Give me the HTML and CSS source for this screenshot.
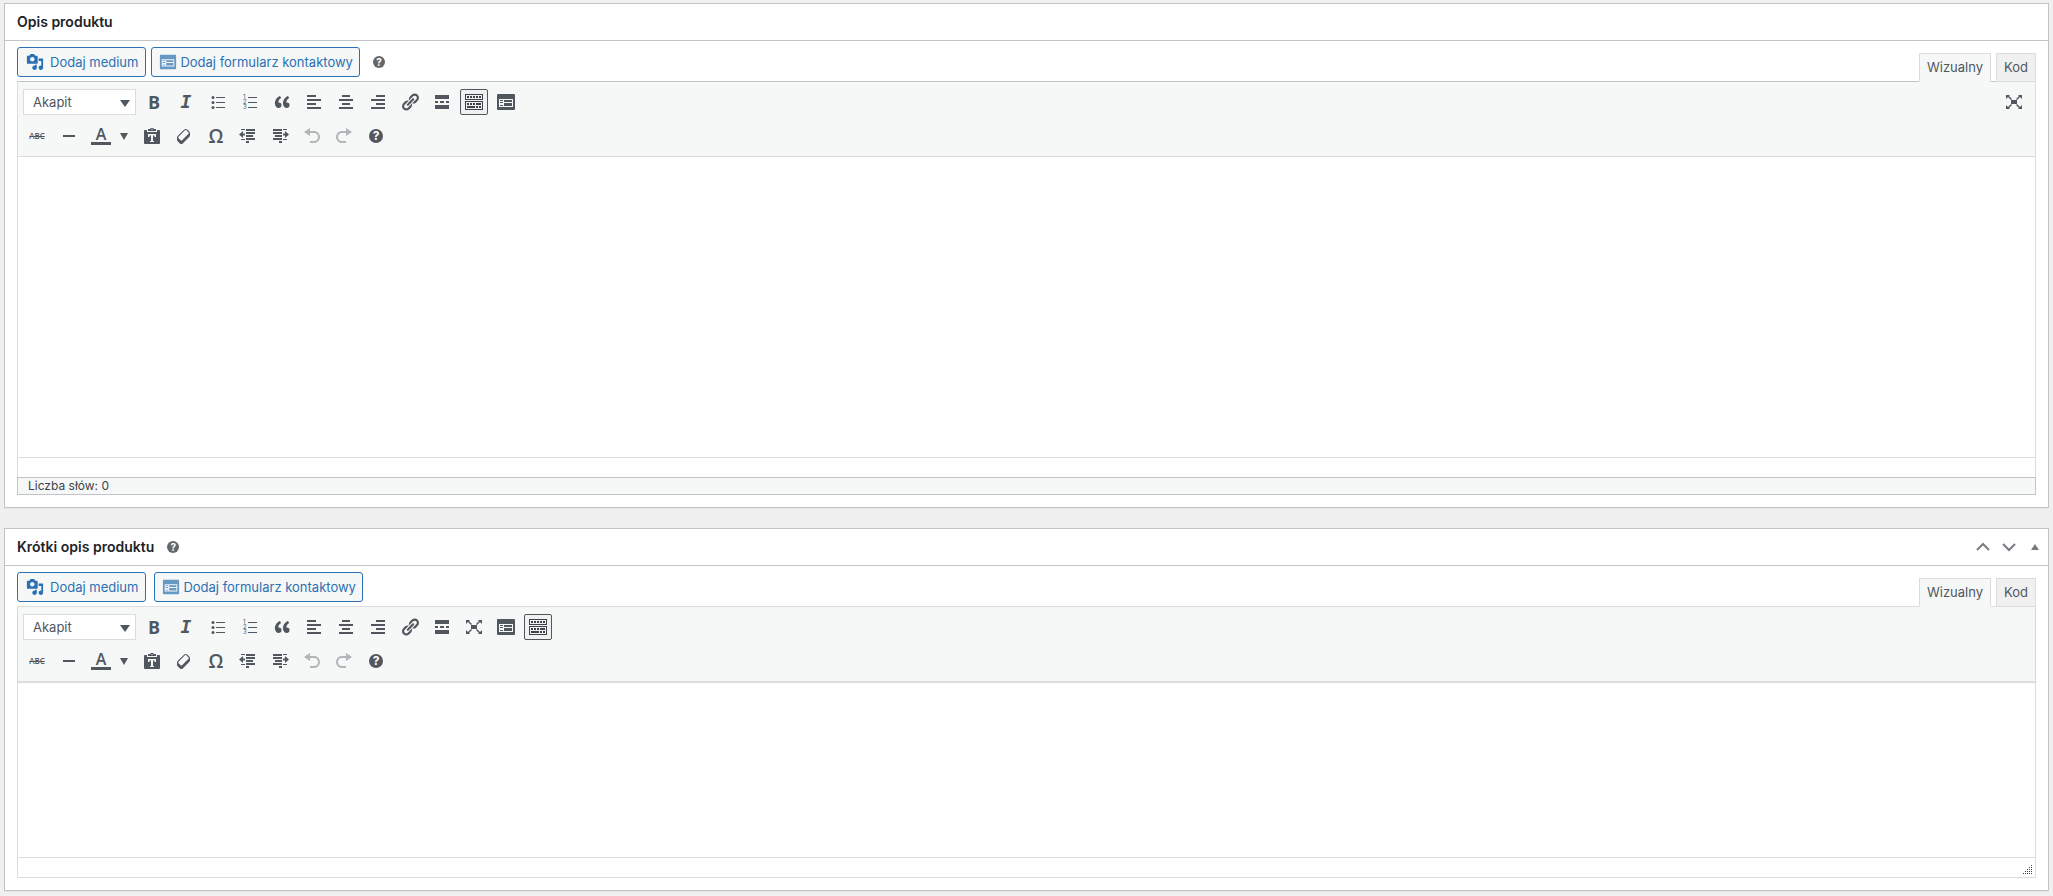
FILE: index.html
```html
<!DOCTYPE html>
<html lang="pl">
<head>
  <meta charset="UTF-8">
  <meta name="viewport" content="width=device-width, initial-scale=1.0">
  <title>Edycja produktu</title>
  <link rel="stylesheet" href="styles.css">
</head>
<body>
  <!-- Ikony -->
  <svg class="sprite" aria-hidden="true">
    <symbol id="i-media" viewBox="0 0 20 20"><path d="M13 11V4c0-.55-.45-1-1-1h-1.67L9 1H5L3.67 3H2c-.55 0-1 .45-1 1v7c0 .55.45 1 1 1h10c.55 0 1-.45 1-1zM7 4.5c1.38 0 2.5 1.12 2.5 2.5S8.38 9.5 7 9.5 4.5 8.38 4.5 7 5.62 4.5 7 4.5zM14 6h5v10.5c0 1.38-1.12 2.5-2.5 2.5S14 17.88 14 16.5s1.12-2.5 2.5-2.5c.17 0 .34.02.5.05V9h-3V6zm-4 8.05V13h2v3.5c0 1.38-1.12 2.5-2.5 2.5S7 17.88 7 16.5 8.12 14 9.5 14c.17 0 .34.02.5.05z"/></symbol>
    <symbol id="i-form" viewBox="0 0 20 20"><path fill-rule="evenodd" d="M2 2h16q1 0 1 1v14q0 1-1 1H2q-1 0-1-1V3q0-1 1-1zm1 5v8h14V7zM4 8h3v1H4zm0 2h3v1H4zm0 3h3v1H4zm4-5h8v2H8zm0 3h8v3H8z"/></symbol>
    <symbol id="i-ul" viewBox="0 0 20 20"><path d="M8 5h9v1H8zm0 5h9v1H8zm0 5h9v1H8z"/><circle cx="5" cy="5.500" r="1.500"/><circle cx="5" cy="10.500" r="1.500"/><circle cx="5" cy="15.500" r="1.500"/></symbol>
    <symbol id="i-ol" viewBox="0 0 20 20"><path d="M8 5h9v1H8zm0 5h9v1H8zm0 5h9v1H8z"/><text x="3" y="7" font-size="6">1</text><text x="3" y="12" font-size="6">2</text><text x="3" y="17" font-size="6">3</text></symbol>
    <symbol id="i-quote" viewBox="0 0 20 20"><path d="M9.490 13.220c0-.74-.2-1.380-.61-1.900-.62-.78-1.830-.88-2.530-.72-.29-1.650 1.110-3.750 2.920-4.650L7.880 4c-2.730 1.300-5.420 4.280-4.960 8.050C3.210 14.430 4.590 16 6.540 16c.85 0 1.560-.25 2.120-.75s.83-1.180.83-2.030zm8.050 0c0-.74-.2-1.380-.61-1.900-.63-.78-1.830-.88-2.530-.72-.29-1.650 1.110-3.750 2.920-4.650L15.930 4c-2.730 1.300-5.410 4.280-4.950 8.050.29 2.380 1.660 3.950 3.610 3.950.85 0 1.560-.25 2.120-.75s.83-1.180.83-2.030z"/></symbol>
    <symbol id="i-left" viewBox="0 0 20 20"><path d="M12 5V3H3v2h9zm5 4V7H3v2h14zm-5 4v-2H3v2h9zm5 4v-2H3v2h14z"/></symbol>
    <symbol id="i-center" viewBox="0 0 20 20"><path d="M14 5V3H6v2h8zm3 4V7H3v2h14zm-3 4v-2H6v2h8zm3 4v-2H3v2h14z"/></symbol>
    <symbol id="i-right" viewBox="0 0 20 20"><path d="M17 5V3H8v2h9zm0 4V7H3v2h14zm0 4v-2H8v2h9zm0 4v-2H3v2h14z"/></symbol>
    <symbol id="i-link" viewBox="0 0 20 20"><path d="M17.740 2.760c1.680 1.690 1.680 4.410 0 6.100l-1.530 1.520c-1.120 1.120-2.700 1.470-4.140 1.090l2.620-2.610.76-.77.76-.76c.84-.84.84-2.200 0-3.040-.84-.85-2.200-.85-3.040 0l-.77.76-3.380 3.380c-.37-1.440-.02-3.020 1.100-4.140l1.520-1.530c1.690-1.680 4.420-1.680 6.100 0zM8.590 13.430l5.340-5.340c.42-.42.42-1.100 0-1.520-.44-.43-1.130-.39-1.530 0l-5.330 5.340c-.42.42-.42 1.100 0 1.520.44.43 1.130.39 1.520 0zm-.76 2.290l4.140-4.150c.38 1.440.03 3.020-1.090 4.140l-1.520 1.530c-1.690 1.680-4.410 1.680-6.100 0-1.680-1.680-1.680-4.420 0-6.100l1.530-1.520c1.120-1.120 2.700-1.470 4.140-1.100l-4.140 4.150c-.85.84-.85 2.200 0 3.050.84.84 2.200.84 3.040 0z"/></symbol>
    <symbol id="i-more" viewBox="0 0 20 20"><path d="M17 7V3H3v4h14zM6 11V9H3v2h3zm6 0V9H8v2h4zm5 0V9h-3v2h3zm0 6v-4H3v4h14z"/></symbol>
    <symbol id="i-sink" viewBox="0 0 20 20"><path d="M19 2v6H1V2h18zm-1 5V3H2v4h16zM5 4v2H3V4h2zm3 0v2H6V4h2zm3 0v2H9V4h2zm3 0v2h-2V4h2zm3 0v2h-2V4h2zm2 5v9H1V9h18zm-1 8v-7H2v7h16zM5 11v2H3v-2h2zm3 0v2H6v-2h2zm3 0v2H9v-2h2zm6 0v2h-5v-2h5zm-6 3v2H3v-2h8zm3 0v2h-2v-2h2zm3 0v2h-2v-2h2z"/></symbol>
    <symbol id="i-full" viewBox="0 0 20 20"><path d="M7 8h6v4H7zM2 3h4L5 4l3 3-1 1-3-3-2 2zm16 0h-4l1 1-3 3 1 1 3-3 2 2zM2 17h4l-1-1 3-3-1-1-3 3-2-2zm16 0h-4l1-1-3-3 1-1 3 3 2-2z"/></symbol>
    <symbol id="i-hr" viewBox="0 0 20 20"><path d="M4 9h12v2H4z"/></symbol>
    <symbol id="i-paste" viewBox="0 0 20 20"><path fill-rule="evenodd" d="M3 4h2v2h10V4h2q1 0 1 1v12q0 1-1 1H3q-1 0-1-1V5q0-1 1-1zm3 1V3h2l1-1h2l1 1h2v2zm3-1.500h2V3H9zM6 8v3h1.500V9.500H9V15H8v1h4v-1h-1V9.500h1.500V11H14V8z"/></symbol>
    <symbol id="i-eraser" viewBox="0 0 20 20"><path d="M14.290 4.590l1.100 1.110c.41.4.61.94.61 1.470v2.120c0 .53-.2 1.070-.61 1.470l-6.630 6.630c-.4.41-.94.61-1.470.61s-1.070-.2-1.470-.61l-1.110-1.100-1.100-1.110c-.41-.4-.61-.94-.61-1.470v-2.120c0-.54.2-1.070.61-1.480l6.630-6.620c.4-.41.94-.61 1.470-.61s1.060.2 1.470.61zm-6.210 9.700l6.420-6.420c.39-.39.39-1.030 0-1.430L12.360 4.300c-.19-.19-.45-.29-.72-.29s-.52.1-.71.29l-6.420 6.420c-.39.4-.39 1.040 0 1.430l2.140 2.140c.38.38 1.040.38 1.430 0z"/></symbol>
    <symbol id="i-outdent" viewBox="0 0 20 20"><path d="M3 3h4v1H3zM8 3h9v2H8zm0 3h9v2H8zm0 3h7v2H8zm0 3h9v2H8zm-5 1h4v1H3zm5 2h3v2H8zM1 8.500L5 5v2.500h2v2H5V12z"/></symbol>
    <symbol id="i-indent" viewBox="0 0 20 20"><path d="M13 3h4v1h-4zM3 3h9v2H3zm0 3h9v2H3zm2 3h7v2H5zm-2 3h9v2H3zm10 1h4v1h-4zm-4 2h3v2H9zM19 8.500L15 5v2.500h-2v2h2V12z"/></symbol>
    <symbol id="i-undo" viewBox="0 0 20 20"><path d="M12 5H8V2L2 6l6 4V7h4c2.200 0 4 1.600 4 4s-1.800 4-4 4H8v2h4c3.300 0 6-2.700 6-6s-2.700-6-6-6z"/></symbol>
    <symbol id="i-redo" viewBox="0 0 20 20"><path d="M8 5h4V2l6 4-6 4V7H8c-2.200 0-4 1.600-4 4s1.800 4 4 4h4v2H8c-3.300 0-6-2.700-6-6s2.700-6 6-6z"/></symbol>
    <symbol id="i-up" viewBox="0 0 20 20"><path fill="none" stroke="currentColor" stroke-width="2" d="M4 13l6-6 6 6"/></symbol>
    <symbol id="i-down" viewBox="0 0 20 20"><path fill="none" stroke="currentColor" stroke-width="2" d="M4 7l6 6 6-6"/></symbol>
    <symbol id="i-grip" viewBox="0 0 10 10"><path d="M8 0h1v1H8zM6 2h1v1H6zm2 0h1v1H8zM4 4h1v1H4zm2 0h1v1H6zm2 0h1v1H8zM2 6h1v1H2zm2 0h1v1H4zm2 0h1v1H6zm2 0h1v1H8zM0 8h1v1H0zm2 0h1v1H2zm2 0h1v1H4zm2 0h1v1H6zm2 0h1v1H8z"/></symbol>
  </svg>

  <!-- Opis produktu -->
  <section class="postbox">
    <header class="postbox-header">
      <h2>Opis produktu</h2>
    </header>
    <div class="inside">
      <div class="editor-tools">
        <div class="media-buttons">
          <button type="button" class="button"><svg class="icon-media"><use href="#i-media"/></svg>Dodaj medium</button>
          <button type="button" class="button button-form"><svg class="icon-form"><use href="#i-form"/></svg>Dodaj formularz kontaktowy</button>
          <span class="help-tip">?</span>
        </div>
        <div class="editor-tabs">
          <button type="button" class="tab active">Wizualny</button>
          <button type="button" class="tab">Kod</button>
        </div>
      </div>
      <div class="editor">
        <div class="toolbar">
          <div class="toolbar-row">
            <span class="format"><select aria-label="Format"><option>Akapit</option><option>Nagłówek 2</option></select></span>
            <button type="button" class="tool bold" title="Pogrubienie">B</button>
            <button type="button" class="tool italic" title="Kursywa">I</button>
            <button type="button" class="tool" title="Lista wypunktowana"><svg><use href="#i-ul"/></svg></button>
            <button type="button" class="tool" title="Lista numerowana"><svg><use href="#i-ol"/></svg></button>
            <button type="button" class="tool" title="Cytat"><svg><use href="#i-quote"/></svg></button>
            <button type="button" class="tool" title="Do lewej"><svg><use href="#i-left"/></svg></button>
            <button type="button" class="tool" title="Do środka"><svg><use href="#i-center"/></svg></button>
            <button type="button" class="tool" title="Do prawej"><svg><use href="#i-right"/></svg></button>
            <button type="button" class="tool" title="Odnośnik"><svg><use href="#i-link"/></svg></button>
            <button type="button" class="tool" title="Czytaj dalej"><svg><use href="#i-more"/></svg></button>
            <button type="button" class="tool pressed" title="Przełącz pasek"><svg><use href="#i-sink"/></svg></button>
            <button type="button" class="tool" title="Formularz"><svg><use href="#i-form"/></svg></button>
            <button type="button" class="tool push" title="Pełny ekran"><svg><use href="#i-full"/></svg></button>
          </div>
          <div class="toolbar-row">
            <button type="button" class="tool strike" title="Przekreślenie">ABC</button>
            <button type="button" class="tool" title="Linia"><svg><use href="#i-hr"/></svg></button>
            <span class="split">
              <button type="button" class="tool color" title="Kolor tekstu"><span>A</span></button>
              <button type="button" class="caret" title="Wybierz kolor"></button>
            </span>
            <button type="button" class="tool" title="Wklej jako tekst"><svg><use href="#i-paste"/></svg></button>
            <button type="button" class="tool" title="Wyczyść formatowanie"><svg><use href="#i-eraser"/></svg></button>
            <button type="button" class="tool omega" title="Znak specjalny">Ω</button>
            <button type="button" class="tool" title="Zmniejsz wcięcie"><svg><use href="#i-outdent"/></svg></button>
            <button type="button" class="tool" title="Zwiększ wcięcie"><svg><use href="#i-indent"/></svg></button>
            <button type="button" class="tool" title="Cofnij" disabled><svg><use href="#i-undo"/></svg></button>
            <button type="button" class="tool" title="Ponów" disabled><svg><use href="#i-redo"/></svg></button>
            <button type="button" class="tool" title="Skróty klawiszowe"><span class="help-icon">?</span></button>
          </div>
        </div>
        <textarea class="content content-long" aria-label="Opis produktu"></textarea>
        <div class="path-bar"></div>
      </div>
      <div class="word-count">Liczba słów: 0</div>
    </div>
  </section>

  <!-- Krótki opis produktu -->
  <section class="postbox">
    <header class="postbox-header">
      <h2>Krótki opis produktu</h2>
      <span class="help-tip">?</span>
      <div class="handle-actions">
        <button type="button" title="Przenieś w górę"><svg><use href="#i-up"/></svg></button>
        <button type="button" title="Przenieś w dół"><svg><use href="#i-down"/></svg></button>
        <button type="button" class="toggle" title="Zwiń panel"></button>
      </div>
    </header>
    <div class="inside">
      <div class="editor-tools">
        <div class="media-buttons wide">
          <button type="button" class="button"><svg class="icon-media"><use href="#i-media"/></svg>Dodaj medium</button>
          <button type="button" class="button button-form"><svg class="icon-form"><use href="#i-form"/></svg>Dodaj formularz kontaktowy</button>
        </div>
        <div class="editor-tabs">
          <button type="button" class="tab active">Wizualny</button>
          <button type="button" class="tab">Kod</button>
        </div>
      </div>
      <div class="editor editor-short">
        <div class="toolbar">
          <div class="toolbar-row">
            <span class="format"><select aria-label="Format"><option>Akapit</option><option>Nagłówek 2</option></select></span>
            <button type="button" class="tool bold" title="Pogrubienie">B</button>
            <button type="button" class="tool italic" title="Kursywa">I</button>
            <button type="button" class="tool" title="Lista wypunktowana"><svg><use href="#i-ul"/></svg></button>
            <button type="button" class="tool" title="Lista numerowana"><svg><use href="#i-ol"/></svg></button>
            <button type="button" class="tool" title="Cytat"><svg><use href="#i-quote"/></svg></button>
            <button type="button" class="tool" title="Do lewej"><svg><use href="#i-left"/></svg></button>
            <button type="button" class="tool" title="Do środka"><svg><use href="#i-center"/></svg></button>
            <button type="button" class="tool" title="Do prawej"><svg><use href="#i-right"/></svg></button>
            <button type="button" class="tool" title="Odnośnik"><svg><use href="#i-link"/></svg></button>
            <button type="button" class="tool" title="Czytaj dalej"><svg><use href="#i-more"/></svg></button>
            <button type="button" class="tool" title="Pełny ekran"><svg><use href="#i-full"/></svg></button>
            <button type="button" class="tool" title="Formularz"><svg><use href="#i-form"/></svg></button>
            <button type="button" class="tool pressed" title="Przełącz pasek"><svg><use href="#i-sink"/></svg></button>
          </div>
          <div class="toolbar-row">
            <button type="button" class="tool strike" title="Przekreślenie">ABC</button>
            <button type="button" class="tool" title="Linia"><svg><use href="#i-hr"/></svg></button>
            <span class="split">
              <button type="button" class="tool color" title="Kolor tekstu"><span>A</span></button>
              <button type="button" class="caret" title="Wybierz kolor"></button>
            </span>
            <button type="button" class="tool" title="Wklej jako tekst"><svg><use href="#i-paste"/></svg></button>
            <button type="button" class="tool" title="Wyczyść formatowanie"><svg><use href="#i-eraser"/></svg></button>
            <button type="button" class="tool omega" title="Znak specjalny">Ω</button>
            <button type="button" class="tool" title="Zmniejsz wcięcie"><svg><use href="#i-outdent"/></svg></button>
            <button type="button" class="tool" title="Zwiększ wcięcie"><svg><use href="#i-indent"/></svg></button>
            <button type="button" class="tool" title="Cofnij" disabled><svg><use href="#i-undo"/></svg></button>
            <button type="button" class="tool" title="Ponów" disabled><svg><use href="#i-redo"/></svg></button>
            <button type="button" class="tool" title="Skróty klawiszowe"><span class="help-icon">?</span></button>
          </div>
        </div>
        <textarea class="content content-short" aria-label="Krótki opis produktu"></textarea>
        <div class="path-bar"><svg class="grip"><use href="#i-grip"/></svg></div>
      </div>
    </div>
  </section>
</body>
</html>
```
FILE: styles.css
```css
:root {
  --blue: #2a70b2;
  --text: #1d2327;
  --icon: #50575e;
  --border: #c3c4c7;
  --border-light: #dcdcde;
  --bar: #f6f7f7;
  --page: #f0f0f1;
}

* {
  box-sizing: border-box;
  margin: 0;
  padding: 0;
}

body {
  font-family: Inter, "Liberation Sans", sans-serif;
  font-size: 13px;
  line-height: 18px;
  color: #3c434a;
  background: var(--page);
  padding: 3px 4px;
}

button,
select,
textarea {
  font: inherit;
  color: inherit;
}

svg {
  fill: currentColor;
}

.sprite {
  display: none;
}

.postbox {
  background: #fff;
  border: 1px solid var(--border);
  box-shadow: 0 1px 1px rgba(0,0,0,0.04);
  margin-bottom: 20px;
}

.postbox:last-child {
  margin-bottom: 0;
}

.postbox-header {
  display: flex;
  align-items: center;
  height: 37px;
  padding: 0 12px;
  border-bottom: 1px solid var(--border);
}

.postbox-header h2 {
  font-size: 14px;
  font-weight: 600;
  color: var(--text);
}

.help-tip,
.help-icon {
  display: flex;
  align-items: center;
  justify-content: center;
  border-radius: 50%;
  color: #fff;
  font-weight: 700;
}

.help-tip {
  width: 12px;
  height: 12px;
  margin-left: 13px;
  background: #666;
  font-size: 10px;
}

.help-icon {
  width: 14px;
  height: 14px;
  background: var(--icon);
  font-size: 12px;
}

.handle-actions {
  display: flex;
  align-items: center;
  gap: 6px;
  margin-left: auto;
  margin-right: -5px;
  color: #787c82;
}

.handle-actions button {
  display: flex;
  justify-content: center;
  width: 20px;
  border: none;
  background: none;
}

.handle-actions svg {
  width: 20px;
  height: 20px;
}

.handle-actions .toggle::before {
  content: "";
  border: 4px solid transparent;
  border-top: none;
  border-bottom: 6px solid #787c82;
}

.handle-actions .toggle {
  width: 12px;
  margin-left: 4px;
}

.inside {
  padding: 6px 12px 12px;
}

.editor-tools {
  display: flex;
  justify-content: space-between;
  align-items: flex-end;
}

.media-buttons {
  display: flex;
  align-items: center;
  gap: 5px;
  margin-bottom: 4px;
}

.media-buttons.wide {
  gap: 8px;
}

.media-buttons .help-tip {
  margin-left: 8px;
}

.button {
  display: flex;
  align-items: center;
  gap: 6px;
  height: 30px;
  padding: 0 7px 0 8px;
  border: 1px solid var(--blue);
  border-radius: 3px;
  background: var(--bar);
  color: var(--blue);
  white-space: nowrap;
  cursor: pointer;
}

.button-form {
  gap: 3px;
  padding: 0 6px 0 7px;
}

.icon-media,
.icon-form {
  width: 18px;
  height: 18px;
}

.icon-form {
  opacity: 0.7;
}

.editor-tabs {
  display: flex;
  gap: 5px;
  margin-bottom: -1px;
  position: relative;
}

.tab {
  height: 29px;
  padding: 0 7px 2px;
  border: 1px solid var(--border-light);
  background: var(--page);
  color: var(--icon);
  cursor: pointer;
}

.tab.active {
  background: var(--bar);
  border-bottom-color: var(--bar);
}

.editor {
  border: 1px solid var(--border-light);
  border-top-color: var(--border);
}

.editor:not(.editor-short) {
  border-bottom: none;
}

.editor-short {
  border-top-color: var(--border-light);
}

.toolbar {
  display: flex;
  flex-direction: column;
  gap: 8px;
  padding: 7px;
  padding-left: 5px;
  background: var(--bar);
  border-bottom: 1px solid var(--border-light);
}

.editor-short .toolbar {
  position: relative;
  box-shadow: 0 1px 1px rgba(0,0,0,0.12);
}

.toolbar-row {
  display: flex;
  gap: 4px;
}

.format {
  position: relative;
}

.format select {
  display: block;
  width: 113px;
  height: 26px;
  padding: 0 9px;
  appearance: none;
  border: 1px solid var(--border-light);
  border-radius: 0;
  background: #fff;
  color: var(--icon);
}

.format::after {
  content: "";
  position: absolute;
  right: 6px;
  top: 11px;
  border: 5px solid transparent;
  border-top: 7px solid var(--icon);
  border-bottom: none;
  pointer-events: none;
}

.tool {
  display: flex;
  align-items: center;
  justify-content: center;
  width: 28px;
  height: 26px;
  border: 1px solid transparent;
  border-radius: 2px;
  background: none;
  color: var(--icon);
  cursor: pointer;
}

.tool svg {
  flex: none;
  width: 20px;
  height: 20px;
}

.tool:disabled {
  opacity: 0.4;
}

.tool.pressed {
  border-color: var(--icon);
  background: var(--page);
  color: #3c434a;
}

.tool.push {
  margin-left: auto;
}

.bold {
  font-family: "Open Sans", sans-serif;
  font-size: 18px;
  font-weight: 700;
}

.italic {
  font-family: "DejaVu Sans Mono", monospace;
  font-size: 18px;
  font-style: italic;
  font-weight: 700;
}

.strike {
  font-family: "Open Sans", sans-serif;
  font-size: 8px;
  font-weight: 600;
  text-decoration: line-through;
}

.omega {
  font-family: "Open Sans", sans-serif;
  font-size: 19px;
  font-weight: 600;
}

.split {
  display: flex;
  width: 47px;
}

.color span {
  width: 20px;
  height: 18px;
  border-bottom: 3px solid var(--icon);
  font-family: "Open Sans", sans-serif;
  font-size: 16px;
  font-weight: 600;
  line-height: 14px;
}

.caret {
  display: flex;
  align-items: center;
  justify-content: center;
  width: 18px;
  border: none;
  background: none;
}

.caret::before {
  content: "";
  border: 4px solid transparent;
  border-top: 7px solid var(--icon);
  border-bottom: none;
}

.content {
  display: block;
  width: 100%;
  padding: 10px;
  border: none;
  outline: none;
  resize: none;
  background: #fff;
}

.content-long {
  height: 300px;
}

.content-short {
  height: 175px;
}

.path-bar {
  display: flex;
  align-items: flex-end;
  justify-content: flex-end;
  height: 20px;
  padding: 2px;
  border-top: 1px solid var(--border-light);
}

.grip {
  width: 10px;
  height: 10px;
}

.word-count {
  padding: 0 10px;
  border: 1px solid var(--border);
  background: var(--bar);
  font-size: 12px;
  line-height: 16px;
}
```
